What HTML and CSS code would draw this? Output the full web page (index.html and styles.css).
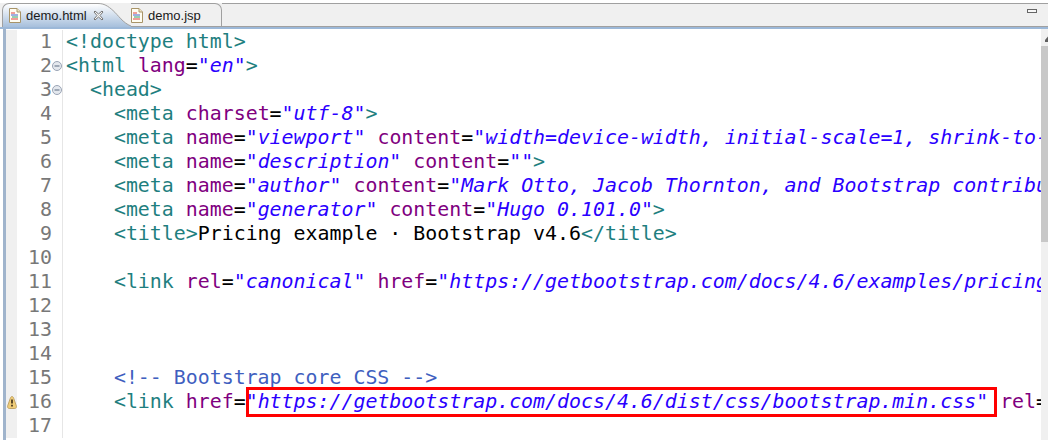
FILE: index.html
```html
<!doctype html>
<html lang="en">
<head>
<meta charset="utf-8">
<title>demo.html</title>
<link rel="stylesheet" href="styles.css">
</head>
<body>
<div class="window">
  <header class="tabbar">
    <div class="tab tab-active">
      <svg class="file-icon" width="12" height="15" viewBox="0 0 12 15"><path d="M.5.5h7.500l3.500 3.500v10.500h-11z" fill="#fffdf2" stroke="#a89468"/><path d="M8 .5v3.500h3.500" fill="#f0e6c8" stroke="#a89468"/><path d="M2 5h4" stroke="#e04040"/><path d="M2 7h7" stroke="#4060d0"/><path d="M3 9h6" stroke="#30a070"/><path d="M2 11h7" stroke="#e04040"/></svg>
      <span class="tab-label">demo.html</span>
      <svg class="close-icon" width="11" height="11" viewBox="0 0 11 11"><path d="M2 1l3.500 3 3.500-3 1 1-3 3.500 3 3.500-1 1-3.500-3-3.500 3-1-1 3-3.500-3-3.500z" fill="#f4f4f4" stroke="#777"/></svg>
    </div>
    <svg class="tab-curve" width="33" height="24" viewBox="0 0 33 24"><defs><linearGradient id="tabfill" x1="0" y1="0" x2="0" y2="1"><stop offset="0" stop-color="#fff"/><stop offset="1" stop-color="#a6bfdc"/></linearGradient></defs><path d="M0 .5C6 .5 10 3 15 7.500S25 20 33 23V24H0z" fill="url(#tabfill)"/><path d="M0 .5C6 .5 10 3 15 7.500S25 20 33 23" fill="none" stroke="#a0a0a0"/></svg>
    <div class="tab tab-idle">
      <svg class="file-icon" width="12" height="15" viewBox="0 0 12 15"><path d="M.5.5h7.500l3.500 3.500v10.500h-11z" fill="#fffdf2" stroke="#a89468"/><path d="M8 .5v3.500h3.500" fill="#f0e6c8" stroke="#a89468"/><path d="M2 5h4" stroke="#e04040"/><path d="M2 7h7" stroke="#4060d0"/><path d="M3 9h6" stroke="#30a070"/><path d="M2 11h7" stroke="#e04040"/></svg>
      <span class="tab-label">demo.jsp</span>
    </div>
    <div class="tabbar-rest"><span class="minimize"></span></div>
  </header>
  <div class="body-row">
    <main class="editor">
      <div class="line"><span class="mark"></span><span class="num">1</span><span class="fold"></span><code class="code"><span class="t">&lt;!doctype html&gt;</span></code></div>
      <div class="line"><span class="mark"></span><span class="num">2</span><span class="fold"><svg width="10" height="10" viewBox="0 0 10 10"><circle cx="5" cy="5" r="4.500" fill="#e4e8ee" stroke="#9aa4b4"/><path d="M2.500 5h5" stroke="#5a6a80"/></svg></span><code class="code"><span class="t">&lt;html</span> <span class="a">lang</span>=<span class="s">"en"</span><span class="t">&gt;</span></code></div>
      <div class="line"><span class="mark"></span><span class="num">3</span><span class="fold"><svg width="10" height="10" viewBox="0 0 10 10"><circle cx="5" cy="5" r="4.500" fill="#e4e8ee" stroke="#9aa4b4"/><path d="M2.500 5h5" stroke="#5a6a80"/></svg></span><code class="code">  <span class="t">&lt;head&gt;</span></code></div>
      <div class="line"><span class="mark"></span><span class="num">4</span><span class="fold"></span><code class="code">    <span class="t">&lt;meta</span> <span class="a">charset</span>=<span class="s">"utf-8"</span><span class="t">&gt;</span></code></div>
      <div class="line"><span class="mark"></span><span class="num">5</span><span class="fold"></span><code class="code">    <span class="t">&lt;meta</span> <span class="a">name</span>=<span class="s">"viewport"</span> <span class="a">content</span>=<span class="s">"width=device-width, initial-scale=1, shrink-to-fit=no"</span><span class="t">&gt;</span></code></div>
      <div class="line"><span class="mark"></span><span class="num">6</span><span class="fold"></span><code class="code">    <span class="t">&lt;meta</span> <span class="a">name</span>=<span class="s">"description"</span> <span class="a">content</span>=<span class="s">""</span><span class="t">&gt;</span></code></div>
      <div class="line"><span class="mark"></span><span class="num">7</span><span class="fold"></span><code class="code">    <span class="t">&lt;meta</span> <span class="a">name</span>=<span class="s">"author"</span> <span class="a">content</span>=<span class="s">"Mark Otto, Jacob Thornton, and Bootstrap contributors"</span><span class="t">&gt;</span></code></div>
      <div class="line"><span class="mark"></span><span class="num">8</span><span class="fold"></span><code class="code">    <span class="t">&lt;meta</span> <span class="a">name</span>=<span class="s">"generator"</span> <span class="a">content</span>=<span class="s">"Hugo 0.101.0"</span><span class="t">&gt;</span></code></div>
      <div class="line"><span class="mark"></span><span class="num">9</span><span class="fold"></span><code class="code">    <span class="t">&lt;title&gt;</span>Pricing example · Bootstrap v4.6<span class="t">&lt;/title&gt;</span></code></div>
      <div class="line"><span class="mark"></span><span class="num">10</span><span class="fold"></span><code class="code"></code></div>
      <div class="line"><span class="mark"></span><span class="num">11</span><span class="fold"></span><code class="code">    <span class="t">&lt;link</span> <span class="a">rel</span>=<span class="s">"canonical"</span> <span class="a">href</span>=<span class="s">"https://getbootstrap.com/docs/4.6/examples/pricing/"</span><span class="t">&gt;</span></code></div>
      <div class="line"><span class="mark"></span><span class="num">12</span><span class="fold"></span><code class="code"></code></div>
      <div class="line"><span class="mark"></span><span class="num">13</span><span class="fold"></span><code class="code"></code></div>
      <div class="line"><span class="mark"></span><span class="num">14</span><span class="fold"></span><code class="code"></code></div>
      <div class="line"><span class="mark"></span><span class="num">15</span><span class="fold"></span><code class="code">    <span class="c">&lt;!-- Bootstrap core CSS --&gt;</span></code></div>
      <div class="line"><span class="mark"><svg class="warn" width="10" height="13" viewBox="0 0 10 13"><path d="M5 .5c1 0 1.300.8 1.700 1.800l2.600 7.500c.4 1.500-.3 2.700-1.500 2.700H2.200C1 12.500.3 11.300.7 9.800l2.600-7.500C3.700 1.300 4 .5 5 .5z" fill="#f0cd78" stroke="#c0a468"/><path d="M5 3.500v4" stroke="#4a3a20" stroke-width="1.800"/><path d="M5 8.800v1.700" stroke="#4a3a20" stroke-width="1.800"/></svg></span><span class="num">16</span><span class="fold"></span><code class="code">    <span class="t">&lt;link</span> <span class="a">href</span>=<span class="s boxed">"https://getbootstrap.com/docs/4.6/dist/css/bootstrap.min.css"</span> <span class="a">rel</span>=<span class="s">"stylesheet"</span> <span class="a">integrity</span>=<span class="s">"sha384"</span><span class="t">&gt;</span></code></div>
      <div class="line"><span class="mark"></span><span class="num">17</span><span class="fold"></span><code class="code"></code></div>
    </main>
    <aside class="scrollbar">
      <div class="scroll-btn"><svg width="7" height="17" viewBox="0 0 7 17"><path d="M7 7.500L4 11v2h3z" fill="#5f5f5f"/></svg></div>
      <div class="scroll-thumb"></div>
      <div class="scroll-track"></div>
    </aside>
  </div>
</div>
</body>
</html>
```
FILE: styles.css
```css
* { box-sizing: border-box; }
html, body { margin: 0; height: 100%; overflow: hidden; background: #fff; }
.window { width: 1048px; height: 440px; display: flex; flex-direction: column; overflow: hidden; }

.tabbar {
  flex: none;
  height: 26px;
  margin-top: 3px;
  display: flex;
  align-items: stretch;
  padding-left: 2px;
  background: #f0f0f0;
  border-bottom: 2px solid #9cb8d8;
  font-family: "Liberation Sans", sans-serif;
  font-size: 13px;
  color: #1a1a1a;
}
.tab { display: flex; align-items: center; height: 24px; }
.tab-active {
  flex: none;
  width: 96px;
  padding-left: 6px;
  border: solid #a0a0a0;
  border-width: 1px 0 0 1px;
  border-top-left-radius: 7px;
  background: linear-gradient(#fff, #a6bfdc);
}
.tab-curve { flex: none; display: block; height: 24px; }
.tab-idle {
  flex: none;
  width: 91px;
  border: solid #a0a0a0;
  border-width: 1px 1px 1px 0;
  border-top-right-radius: 7px;
}
.file-icon { flex: none; display: block; }
.tab-label { margin-left: 5px; white-space: nowrap; }
.close-icon { flex: none; margin-left: 6px; display: block; position: relative; z-index: 1; }
.tabbar-rest {
  flex: 1;
  height: 24px;
  border-top: 1px solid #a0a0a0;
  border-bottom: 1px solid #a0a0a0;
  display: flex;
  justify-content: flex-end;
  align-items: flex-start;
  padding: 5px 11px 0 0;
}
.minimize { width: 10px; height: 4px; border: 1px solid #666; background: #f8f8f8; }

.body-row { flex: 1; min-height: 0; display: flex; }
.editor {
  flex: 1;
  min-width: 0;
  overflow: hidden;
  padding-top: 1px;
  border-left: 3px solid #a0b4cc;
  margin-left: 3px;
  font-family: "DejaVu Sans Mono", monospace;
  font-size: 19.9px;
}
.line { height: 24px; display: flex; align-items: stretch; line-height: 24px; }
.mark { flex: none; width: 11px; background: #f0f0f0; display: flex; align-items: center; justify-content: center; }
.warn { flex: none; display: block; }
.num { flex: none; width: 35px; text-align: right; color: #787878; }
.fold { flex: none; width: 10px; display: flex; align-items: center; justify-content: center; }
.code {
  flex: none;
  margin: 0;
  padding-left: 3px;
  border-left: 1px solid #e6e6e6;
  white-space: pre;
  font: inherit;
  color: #000;
}
.t { color: #1f7f7f; }
.a { color: #7f007f; }
.s { color: #2a00ff; font-style: italic; }
.c { color: #3f5fbf; }
.boxed { position: relative; }
.boxed::after {
  content: "";
  position: absolute;
  left: 0;
  right: -9px;
  top: -3px;
  bottom: -4px;
  border: 3px solid #ff0000;
}

.scrollbar { flex: none; width: 7px; display: flex; flex-direction: column; background: #f0f0f0; }
.scroll-btn { flex: none; height: 17px; }
.scroll-btn svg { display: block; }
.scroll-thumb { flex: none; height: 196px; background: #c8c8c8; }
.scroll-track { flex: 1; }
```
